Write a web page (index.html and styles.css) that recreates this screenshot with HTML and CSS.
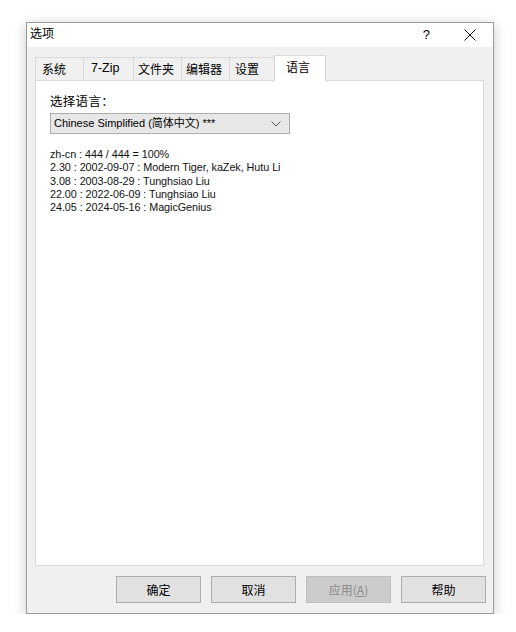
FILE: index.html
```html
<!DOCTYPE html>
<html lang="zh-CN">
<head>
<meta charset="utf-8">
<title>选项</title>
<link rel="stylesheet" href="styles.css">
</head>
<body>
<div class="window">
  <div class="titlebar">
    <span class="title">选项</span>
    <span class="help">?</span>
    <span class="close">
      <svg width="12" height="12" viewBox="0 0 12 12"><path d="M0.5 0.5 L11.5 11.5 M11.5 0.5 L0.5 11.5" stroke="#111" stroke-width="1" fill="none"/></svg>
    </span>
  </div>
  <div class="body">
    <div class="tabs">
      <div class="tab t1">系统</div>
      <div class="tab t2 latin">7-Zip</div>
      <div class="tab t3">文件夹</div>
      <div class="tab t4">编辑器</div>
      <div class="tab t5">设置</div>
      <div class="tab active">语言</div>
    </div>
    <div class="panel">
      <div class="label">选择语言：</div>
      <div class="combo">
        <span class="combo-text">Chinese Simplified (简体中文) ***</span>
        <svg class="chev" width="10" height="6" viewBox="0 0 10 6"><path d="M0.5 0.5 L5 5 L9.5 0.5" stroke="#555" stroke-width="1" fill="none"/></svg>
      </div>
      <div class="info">
        <div>zh-cn : 444 / 444 = 100%</div>
        <div>2.30 : 2002-09-07 : Modern Tiger, kaZek, Hutu Li</div>
        <div>3.08 : 2003-08-29 : Tunghsiao Liu</div>
        <div>22.00 : 2022-06-09 : Tunghsiao Liu</div>
        <div>24.05 : 2024-05-16 : MagicGenius</div>
      </div>
    </div>
    <div class="buttons">
      <div class="btn">确定</div>
      <div class="btn">取消</div>
      <div class="btn disabled">应用(<u>A</u>)</div>
      <div class="btn">帮助</div>
    </div>
  </div>
</div>
</body>
</html>
```
FILE: styles.css
```css
html, body {
  margin: 0;
  padding: 0;
  background: #ffffff;
}
body {
  font-family: "Noto Sans CJK SC", "Liberation Sans", sans-serif;
  font-size: 12px;
  color: #000;
}
.window {
  margin: 22px 0 0 26px;
  width: 466px;
  border: 1px solid #9a9a9a;
  background: #f0f0f0;
  box-shadow: 0 3px 12px rgba(0,0,0,0.22);
}
.titlebar {
  height: 24px;
  background: #ffffff;
  display: flex;
  align-items: flex-start;
  padding-top: 2px;
  box-sizing: border-box;
}
.title {
  margin-left: 3px;
  line-height: 16px;
  font-size: 12px;
  flex: 1;
}
.help {
  font-family: "Liberation Sans", sans-serif;
  font-size: 13px;
  line-height: 16px;
  margin-top: 2px;
  margin-right: 34px;
}
.close {
  display: flex;
  margin-top: 4px;
  margin-right: 17px;
}
.body {
  padding: 10px 9px 10px 8px;
}
.tabs {
  display: flex;
  align-items: flex-end;
  height: 23px;
}
.tab {
  box-sizing: border-box;
  height: 23px;
  border-top: 1px solid #d9d9d9;
  border-left: 1px solid #d9d9d9;
  background: #f0f0f0;
  font-size: 12px;
  line-height: 21px;
  padding-left: 6px;
}
.tab.latin {
  font-family: "Liberation Sans", sans-serif;
  font-size: 12.5px;
  padding-left: 7px;
}
.t1 { width: 48px; }
.t2 { width: 50px; }
.t3 { width: 48px; padding-left: 4px; }
.t4 { width: 48px; padding-left: 4px; }
.t5 { width: 45px; padding-left: 5px; }
.tab.active {
  width: 52px;
  height: 26px;
  margin-bottom: -1px;
  background: #ffffff;
  border-right: 1px solid #d9d9d9;
  position: relative;
  z-index: 1;
  line-height: 22px;
  padding-left: 11px;
}
.panel {
  box-sizing: border-box;
  width: 449px;
  height: 486px;
  background: #ffffff;
  border: 1px solid #d9d9d9;
  padding: 12px 0 0 14px;
}
.label {
  font-size: 12.5px;
  line-height: 16px;
  letter-spacing: 0.3px;
}
.combo {
  box-sizing: border-box;
  margin-top: 4px;
  width: 240px;
  height: 21px;
  background: #e7e7e7;
  border: 1px solid #adadad;
  display: flex;
  align-items: center;
  justify-content: space-between;
  padding: 0 8px 0 3px;
}
.combo-text {
  font-family: "Liberation Sans", "Noto Sans CJK SC", sans-serif;
  font-size: 11px;
  line-height: 19px;
}
.chev {
  display: block;
}
.info {
  margin-top: 14px;
  font-family: "Liberation Sans", sans-serif;
  font-size: 10.8px;
  letter-spacing: -0.05px;
  line-height: 13.3px;
  color: #111;
}
.buttons {
  display: flex;
  justify-content: flex-end;
  gap: 10px;
  margin-top: 10px;
  margin-right: -2px;
}
.btn {
  box-sizing: border-box;
  width: 85px;
  height: 27px;
  background: #e1e1e1;
  border: 1px solid #adadad;
  text-align: center;
  line-height: 25px;
  font-size: 12px;
}
.btn.disabled {
  background: #cccccc;
  border-color: #bfbfbf;
  color: #8a8a8a;
  font-family: "Noto Sans CJK SC", "Liberation Sans", sans-serif;
}
.btn.disabled u {
  text-decoration: underline;
}
```
